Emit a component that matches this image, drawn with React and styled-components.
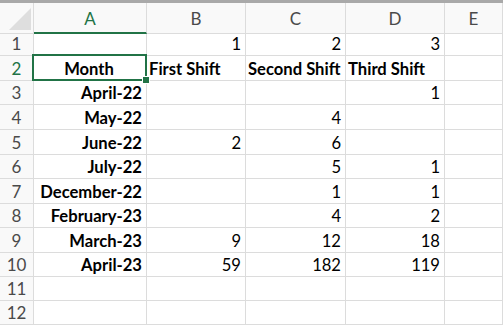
import React from "react";
import styled, { createGlobalStyle, css } from "styled-components";

const GREEN = "#217346";
const GRID = "#dcdcdc";

const Global = createGlobalStyle`
  html, body { margin: 0; padding: 0; background: #fff; }
  body { font-family: "Lato", "Open Sans", sans-serif; overflow: hidden; }
`;

const Sheet = styled.div`
  width: 503px;
  height: 326px;
  border-top: 3px solid #a9a9a9;
  box-sizing: border-box;
  display: grid;
  grid-template-columns: 34px 113px 99px 100px 99px 1fr;
  grid-template-rows: 31px 22px 25px 24px 25px 25px 24px 25px 24px 25px 24px 24px 24px 1fr;
  overflow: hidden;
`;

const Corner = styled.div`
  background: #f9f9f9;
  border-right: 1px solid ${GRID};
  border-bottom: 1px solid ${GRID};
  display: flex;
  align-items: flex-end;
  justify-content: flex-end;
  padding: 0 2px 3px 0;
`;

const ColHead = styled.div`
  background: #f9f9f9;
  border-right: 1px solid ${GRID};
  border-bottom: 1px solid ${GRID};
  display: flex;
  align-items: center;
  justify-content: center;
  font-size: 17px;
  color: #4a4a4a;
  padding-top: 1px;
  ${(p) =>
    p.$active &&
    css`
      color: ${GREEN};
      border-bottom: 2px solid ${GREEN};
    `}
`;

const RowHead = styled.div`
  background: #f9f9f9;
  border-right: 1px solid ${GRID};
  border-bottom: 1px solid ${GRID};
  display: flex;
  align-items: flex-end;
  justify-content: center;
  font-size: 17px;
  color: #4a4a4a;
  line-height: 20px;
  padding-bottom: 1px;
  ${(p) =>
    p.$active &&
    css`
      color: ${GREEN};
    `}
`;

const Cell = styled.div`
  position: relative;
  border-right: 1px solid ${GRID};
  border-bottom: 1px solid ${GRID};
  display: flex;
  align-items: flex-end;
  justify-content: ${(p) =>
    p.$align === "center" ? "center" : p.$align === "left" ? "flex-start" : "flex-end"};
  padding: 0 4px 1px 2px;
  font-size: 16.6px;
  line-height: 20px;
  color: #000;
  font-weight: ${(p) => (p.$bold ? 700 : 400)};
  white-space: nowrap;
`;

const Selection = styled.div`
  position: absolute;
  left: -2px;
  top: -2px;
  right: -1px;
  bottom: -1px;
  border: 2px solid ${GREEN};
  pointer-events: none;
  z-index: 2;
`;

const Handle = styled.div`
  position: absolute;
  right: -5px;
  bottom: -5px;
  width: 6px;
  height: 6px;
  background: ${GREEN};
  border: 1px solid #fff;
  z-index: 3;
`;

const cols = ["A", "B", "C", "D", "E"];

const rows = [
  [{ v: "" }, { v: "1" }, { v: "2" }, { v: "3" }, { v: "" }],
  [
    { v: "Month", bold: true, align: "center", selected: true },
    { v: "First Shift", bold: true, align: "left" },
    { v: "Second Shift", bold: true, align: "left" },
    { v: "Third Shift", bold: true, align: "left" },
    { v: "" },
  ],
  [{ v: "April-22", bold: true }, { v: "" }, { v: "" }, { v: "1" }, { v: "" }],
  [{ v: "May-22", bold: true }, { v: "" }, { v: "4" }, { v: "" }, { v: "" }],
  [{ v: "June-22", bold: true }, { v: "2" }, { v: "6" }, { v: "" }, { v: "" }],
  [{ v: "July-22", bold: true }, { v: "" }, { v: "5" }, { v: "1" }, { v: "" }],
  [{ v: "December-22", bold: true }, { v: "" }, { v: "1" }, { v: "1" }, { v: "" }],
  [{ v: "February-23", bold: true }, { v: "" }, { v: "4" }, { v: "2" }, { v: "" }],
  [{ v: "March-23", bold: true }, { v: "9" }, { v: "12" }, { v: "18" }, { v: "" }],
  [{ v: "April-23", bold: true }, { v: "59" }, { v: "182" }, { v: "119" }, { v: "" }],
  [{ v: "" }, { v: "" }, { v: "" }, { v: "" }, { v: "" }],
  [{ v: "" }, { v: "" }, { v: "" }, { v: "" }, { v: "" }],
];

export default function App() {
  return (
    <>
      <Global />
      <Sheet>
        <Corner>
          <svg width="22" height="22" viewBox="0 0 22 22">
            <polygon points="22,0 22,22 0,22" fill="#dedede" />
          </svg>
        </Corner>
        {cols.map((c) => (
          <ColHead key={c} $active={c === "A"}>
            {c}
          </ColHead>
        ))}
        {rows.map((r, i) => (
          <React.Fragment key={i}>
            <RowHead $active={i === 1}>{i + 1}</RowHead>
            {r.map((cell, j) => (
              <Cell key={j} $bold={cell.bold} $align={cell.align}>
                {cell.v}
                {cell.selected && (
                  <Selection>
                    <Handle />
                  </Selection>
                )}
              </Cell>
            ))}
          </React.Fragment>
        ))}
      </Sheet>
    </>
  );
}
